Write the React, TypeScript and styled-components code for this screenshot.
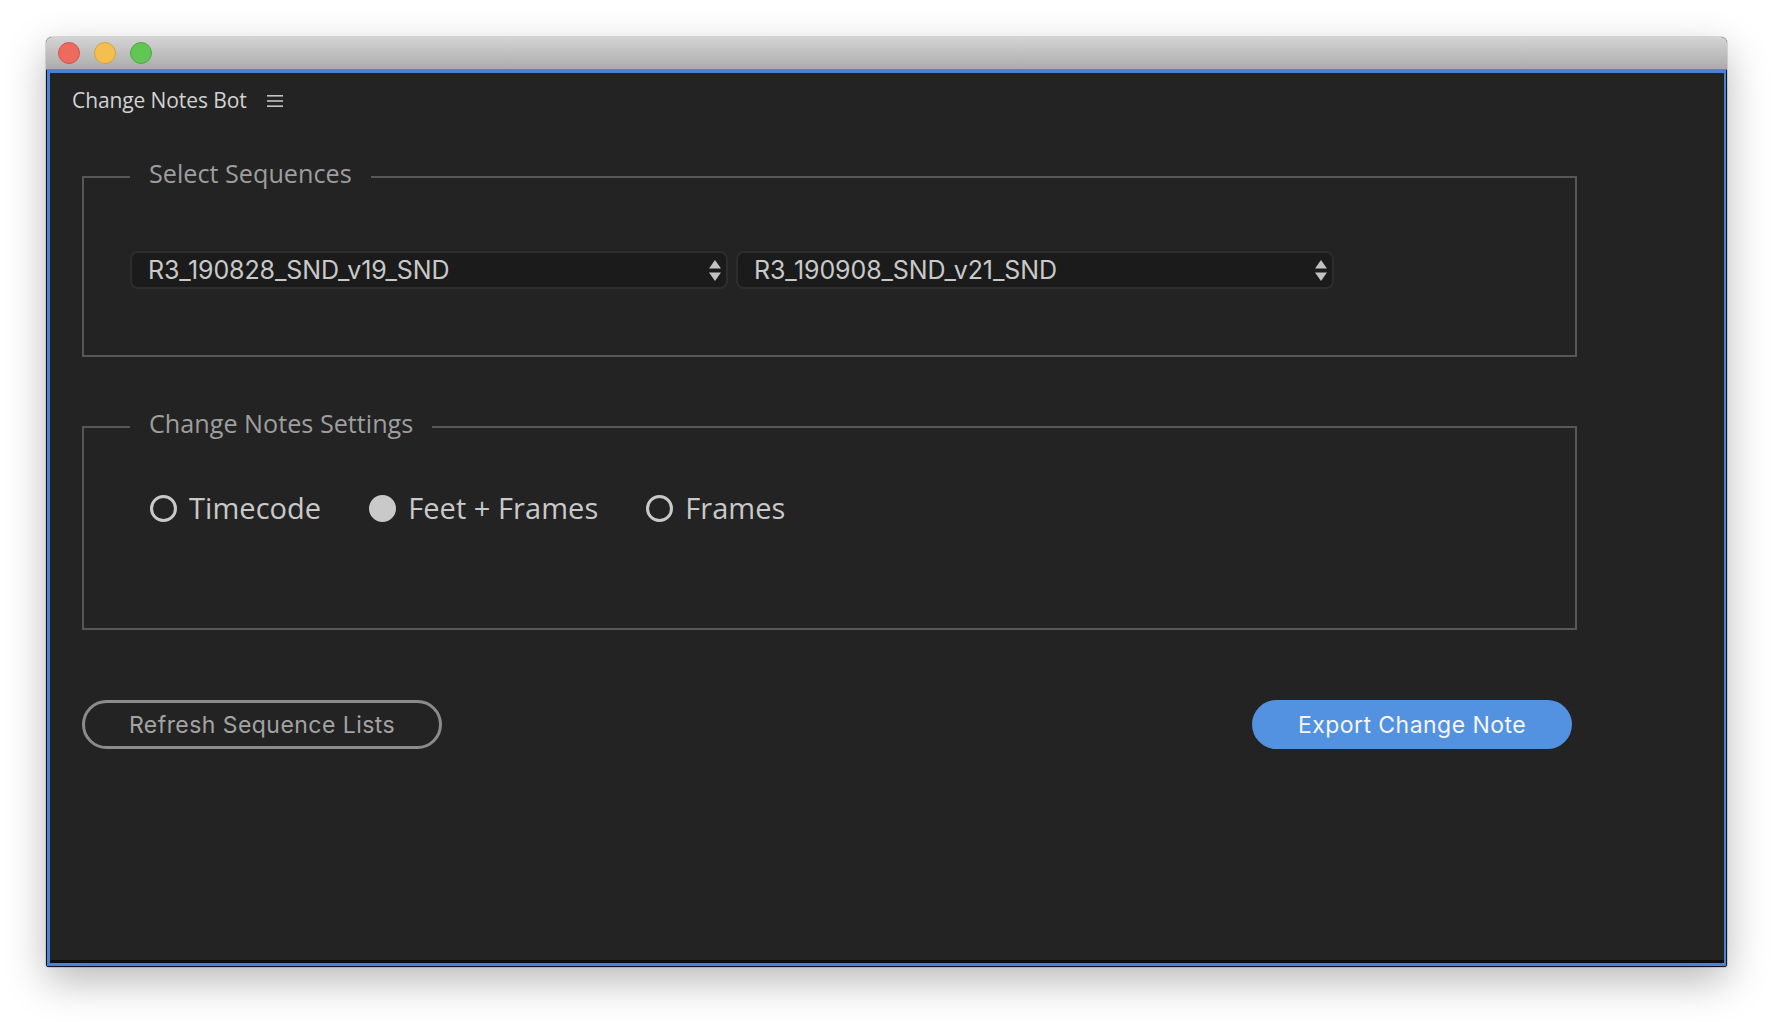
import React, { useState } from "react";
import styled, { createGlobalStyle } from "styled-components";

const GlobalStyle = createGlobalStyle`
  html, body { margin: 0; padding: 0; background: #ffffff; }
  body { font-family: "Open Sans", "Noto Sans", sans-serif; }
  * { box-sizing: border-box; }
`;

const Page = styled.div`
  padding: 37px 0 0 46px;
  width: 1772px;
  height: 1022px;
  overflow: hidden;
`;

const Window = styled.div`
  width: 1681px;
  height: 930px;
  display: flex;
  flex-direction: column;
  border-radius: 6px 6px 3px 3px;
  overflow: hidden;
  background: #161616;
  box-shadow: 0 14px 40px rgba(0, 0, 0, 0.28), 0 0 0 1px rgba(0, 0, 0, 0.12);
`;

const TitleBar = styled.div`
  height: 33px;
  flex: none;
  display: flex;
  align-items: center;
  gap: 14px;
  padding-left: 12px;
  background: linear-gradient(#d4d4d4, #acacac);
  border-bottom: 1px solid #7e7e7e;
`;

const Light = styled.span<{ $fill: string; $edge: string }>`
  width: 22px;
  height: 22px;
  border-radius: 50%;
  background: ${(p) => p.$fill};
  border: 1px solid ${(p) => p.$edge};
`;

const Frame = styled.div`
  flex: 1;
  display: flex;
  padding: 0 1px 1px 1px;
  background: #151515;
`;

const Panel = styled.div`
  flex: 1;
  display: flex;
  flex-direction: column;
  background: #232323;
  border: 3px solid #4a82d6;
  border-right-width: 2px;
  box-shadow: inset 0 -3px 0 #0d0d0d;
`;

const Header = styled.div`
  display: flex;
  align-items: center;
  gap: 20px;
  padding: 14px 0 0 22px;
  height: 40px;
`;

const PanelTitle = styled.span`
  font-family: "Open Sans", sans-serif;
  font-size: 21px;
  line-height: 26px;
  letter-spacing: -0.1px;
  color: #d2d2d2;
`;

const MenuIcon = styled.svg`
  width: 16px;
  height: 14px;
  color: #c4c4c4;
  margin-top: 2px;
`;

const Main = styled.div`
  display: flex;
  flex-direction: column;
  padding: 44px 147px 0 32px;
`;

const Group = styled.fieldset<{ $top: number; $bottom: number; $gapTop?: number }>`
  margin: ${(p) => p.$gapTop ?? 0}px 0 0 0;
  min-width: 0;
  border: 2px solid #575757;
  padding: ${(p) => p.$top}px 20px ${(p) => p.$bottom}px 46px;
`;

const Legend = styled.legend`
  padding: 0 19px 8px;
  font-family: "Open Sans", sans-serif;
  font-size: 25.2px;
  line-height: 32px;
  color: #9e9e9e;
`;

const SelectRow = styled.div`
  display: flex;
  gap: 8px;
`;

const SelectBox = styled.div`
  width: 598px;
  height: 38px;
  display: flex;
  align-items: center;
  justify-content: space-between;
  padding: 0 5px 0 16px;
  background: #1b1b1b;
  border: 2px solid #2d2d2d;
  border-radius: 8px;
`;

const SelectText = styled.span`
  font-family: Inter, "Liberation Sans", sans-serif;
  font-size: 25px;
  letter-spacing: -0.1px;
  color: #c9c9c9;
`;

const Arrows = styled.svg`
  width: 12px;
  height: 21px;
  color: #c2c2c2;
`;

const RadioRow = styled.div`
  display: flex;
  align-items: center;
  gap: 48px;
  height: 40px;
  padding-left: 20px;
`;

const RadioItem = styled.label`
  display: flex;
  align-items: center;
  gap: 12px;
  cursor: pointer;
`;

const RadioDot = styled.span<{ $on: boolean }>`
  width: 27px;
  height: 27px;
  border-radius: 50%;
  border: 3.5px solid #c9c9c9;
  background: ${(p) => (p.$on ? "#c9c9c9" : "transparent")};
`;

const RadioLabel = styled.span`
  font-family: "Open Sans", sans-serif;
  font-size: 29px;
  line-height: 40px;
  letter-spacing: 0.05px;
  color: #c9c9c9;
`;

const ButtonRow = styled.div`
  display: flex;
  justify-content: space-between;
  align-items: center;
  margin-top: 70px;
  padding-right: 5px;
`;

const PillButton = styled.button<{ $primary?: boolean; $width: number }>`
  width: ${(p) => p.$width}px;
  height: 49px;
  border-radius: 25px;
  font-family: Inter, "Liberation Sans", sans-serif;
  font-size: 23px;
  letter-spacing: 0.45px;
  cursor: pointer;
  border: ${(p) => (p.$primary ? "none" : "3.5px solid #8b8b8b")};
  background: ${(p) => (p.$primary ? "#5391e1" : "transparent")};
  color: ${(p) => (p.$primary ? "#f5f7fa" : "#a3a3a3")};
`;

const ArrowGlyph = () => (
  <Arrows viewBox="0 0 12 21">
    <path d="M6 0 L12 8.5 L0 8.5 Z" fill="currentColor" />
    <path d="M6 21 L12 12.5 L0 12.5 Z" fill="currentColor" />
  </Arrows>
);

const options = ["Timecode", "Feet + Frames", "Frames"];

export default function App() {
  const [mode, setMode] = useState("Feet + Frames");
  return (
    <>
      <GlobalStyle />
      <Page>
        <Window>
          <TitleBar>
            <Light $fill="#ee6a5f" $edge="#d2544a" />
            <Light $fill="#f5bf4f" $edge="#d9a13e" />
            <Light $fill="#62c655" $edge="#4ea93f" />
          </TitleBar>
          <Frame>
            <Panel>
              <Header>
                <PanelTitle>Change Notes Bot</PanelTitle>
                <MenuIcon viewBox="0 0 16 14">
                  <rect x="0" y="1" width="16" height="1.6" fill="currentColor" />
                  <rect x="0" y="6.2" width="16" height="1.6" fill="currentColor" />
                  <rect x="0" y="11.4" width="16" height="1.6" fill="currentColor" />
                </MenuIcon>
              </Header>
              <Main>
                <Group $top={54} $bottom={66}>
                  <Legend>Select Sequences</Legend>
                  <SelectRow>
                    <SelectBox>
                      <SelectText>R3_190828_SND_v19_SND</SelectText>
                      <ArrowGlyph />
                    </SelectBox>
                    <SelectBox>
                      <SelectText>R3_190908_SND_v21_SND</SelectText>
                      <ArrowGlyph />
                    </SelectBox>
                  </SelectRow>
                </Group>
                <Group $top={41} $bottom={100} $gapTop={50}>
                  <Legend>Change Notes Settings</Legend>
                  <RadioRow>
                    {options.map((o) => (
                      <RadioItem key={o} onClick={() => setMode(o)}>
                        <RadioDot $on={mode === o} />
                        <RadioLabel>{o}</RadioLabel>
                      </RadioItem>
                    ))}
                  </RadioRow>
                </Group>
                <ButtonRow>
                  <PillButton $width={360}>Refresh Sequence Lists</PillButton>
                  <PillButton $primary $width={320}>
                    Export Change Note
                  </PillButton>
                </ButtonRow>
              </Main>
            </Panel>
          </Frame>
        </Window>
      </Page>
    </>
  );
}
